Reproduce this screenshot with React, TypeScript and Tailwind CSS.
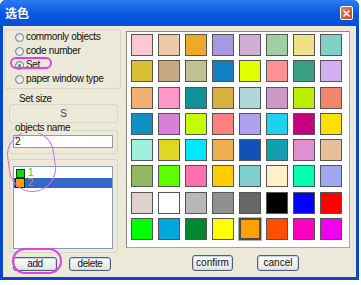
import React from 'react';

const COLORS: string[][] = [
  ['#FFC8D0', '#F0C8A8', '#F0A828', '#A898E0', '#D0B0D0', '#A0D0A0', '#F0E088', '#80D0C8'],
  ['#D8C030', '#C8A880', '#C0C090', '#1080C0', '#E0FF00', '#FF9098', '#38A080', '#D0B0F0'],
  ['#F0B070', '#FF98C8', '#109098', '#D8B040', '#B0D8D8', '#D098C8', '#B8F000', '#F08870'],
  ['#1090C0', '#D880D8', '#C8FF00', '#FF8080', '#B0A0F0', '#20D0F0', '#C80080', '#FFE000'],
  ['#A0F0E0', '#E0D820', '#00E8FF', '#F0B050', '#1050B8', '#10A0B0', '#E090D0', '#E8C098'],
  ['#90B860', '#60FF00', '#FF70B0', '#FFCC00', '#80D0D0', '#FFF0C8', '#00FFB0', '#A0A8F0'],
  ['#E0D0D0', '#FFFFFF', '#B8B8B8', '#909090', '#686868', '#000000', '#0000FF', '#FF0000'],
  ['#00FF00', '#00A8E0', '#008830', '#FFFF00', '#FFA000', '#FF5000', '#FF00C0', '#F000F0'],
];

const Radio = ({ label, checked }: { label: string; checked?: boolean }) => (
  <div className="h-[14px] flex items-center pl-[10px] gap-[2px]">
    <span className="w-[9px] h-[9px] rounded-full border border-[#5a7aa8] bg-gradient-to-br from-[#dcdcd4] to-white flex items-center justify-center">
      {checked && <span className="w-[3px] h-[3px] rounded-full bg-[#3aa03a]"></span>}
    </span>
    <span>{label}</span>
  </div>
);

const XpButton = ({ label, className }: { label: string; className: string }) => (
  <div className={`flex items-center justify-center border border-[#4a5f86] rounded-[3px] bg-gradient-to-b from-white to-[#e6e4dc] shadow-[inset_0_0_0_1px_#c8d8f0] ${className}`}>
    {label}
  </div>
);

const App: React.FC = () => {
  return (
    <div className="w-[361px] h-[285px] bg-white font-['Liberation_Sans',Arial,sans-serif] text-[10px] leading-none text-[#111]">
      <div className="w-[359px] h-[280px] bg-[#0A45CC] flex flex-col rounded-t-[6px] overflow-hidden">
        {/* Title bar */}
        <div className="h-[26px] shrink-0 flex items-center pl-[5px] bg-gradient-to-b from-[#2E7CF0] via-[#0A58E2] to-[#0650D6]">
          <span className="text-white font-bold text-[12px] font-['Noto_Sans_CJK_SC',sans-serif]">选色</span>
          <div className="ml-auto mr-[6px] w-[13px] h-[14px] rounded-[2px] border border-white bg-gradient-to-br from-[#E8805E] to-[#C8401C] flex items-center justify-center">
            <svg width="7" height="7" viewBox="0 0 7 7">
              <path d="M1 1L6 6M6 1L1 6" stroke="white" strokeWidth="1.6" strokeLinecap="round" />
            </svg>
          </div>
        </div>

        {/* Body */}
        <div className="flex-1 mx-[3px] mb-[3px] bg-[#ECE9D8] flex relative">
          {/* Left column */}
          <div className="w-[117px] ml-[1px] pt-[3px] flex flex-col tracking-[-0.35px]">
            <div className="h-[60px] border border-[#D8D6C6] rounded-[3px]">
              <Radio label="commonly objects" />
              <Radio label="code number" />
              <Radio label="Set" checked />
              <Radio label="paper window type" />
            </div>

            <div className="mt-[5px] h-[10px] pl-[15px] flex items-center">Set size</div>
            <div className="ml-[5px] w-[109px] h-[19px] border border-[#D8D6C6] rounded-[3px] flex items-center justify-center text-[#444]">
              S
            </div>

            <div className="h-[10px] pl-[11px] flex items-center relative z-10">
              <span className="bg-[#ECE9D8] pr-[2px]">objects name</span>
            </div>
            <div className="ml-[5px] w-[109px] -mt-[3px] border border-[#D8D6C6] rounded-[3px] pt-[4px] pb-[5px] pl-[3px]">
              <div className="w-[100px] h-[13px] border border-[#7F9DB9] bg-white pl-[1px] flex items-center">2</div>
            </div>

            <div className="ml-[5px] w-[109px] mt-[5px] border border-[#D8D6C6] rounded-[3px] pt-[6px] pb-[3px] pl-[3px]">
              <div className="w-[100px] h-[83px] border border-[#7F9DB9] bg-white pt-[1px]">
                <div className="h-[10px] flex items-center pl-[2px] gap-[3px]">
                  <span className="w-[9px] h-[9px] bg-[#00E000] border border-[#2a2a2a]"></span>
                  <span className="text-[#30D030]">1</span>
                </div>
                <div className="h-[10px] flex items-center pl-[1px] gap-[3px] bg-[#316AC5]">
                  <span className="w-[10px] h-[10px] bg-[#FFA000] border border-[#202020]"></span>
                  <span className="text-[#B0A040]">2</span>
                </div>
              </div>
            </div>

            <div className="mt-[4px] flex gap-[12px] pl-[9px]">
              <XpButton label="add" className="w-[44px] h-[14px]" />
              <XpButton label="delete" className="w-[42px] h-[14px]" />
            </div>
          </div>

          {/* Right column */}
          <div className="ml-[5px] pt-[5px] flex flex-col">
            <div className="w-[224px] h-[217px] bg-white border border-[#A5A5A5] border-t-[#8a8a8a] border-l-[#8a8a8a] pt-[2px] pl-[4px]">
              <div className="grid grid-cols-[repeat(8,22px)] gap-x-[5px] gap-y-[4.3px]">
                {COLORS.flat().map((c, i) =>
                  i === 60 ? (
                    <div key={i} className="w-[22px] h-[22px] border-2 border-[#4a4a4a] outline outline-1 outline-[#b0b0b0]" style={{ backgroundColor: c }}></div>
                  ) : (
                    <div key={i} className="w-[22px] h-[22px] border border-[#555555]" style={{ backgroundColor: c }}></div>
                  )
                )}
              </div>
            </div>
            <div className="mt-[7px] flex gap-[24px] pl-[66px]">
              <XpButton label="confirm" className="w-[41px] h-[16px]" />
              <XpButton label="cancel" className="w-[42px] h-[16px]" />
            </div>
          </div>

          {/* Pink annotation marks */}
          <div className="absolute left-[7px] top-[31px] w-[42px] h-[12px] rounded-full border-2 border-[#E040E0]"></div>
          <div className="absolute left-[5px] top-[105px] w-[47px] h-[61px] rounded-full border border-[#D070E0] -rotate-[8deg]"></div>
          <div className="absolute left-[9px] top-[222px] w-[50px] h-[26px] rounded-full border-2 border-[#E040E0]"></div>
        </div>
      </div>
    </div>
  );
};

export default App;
